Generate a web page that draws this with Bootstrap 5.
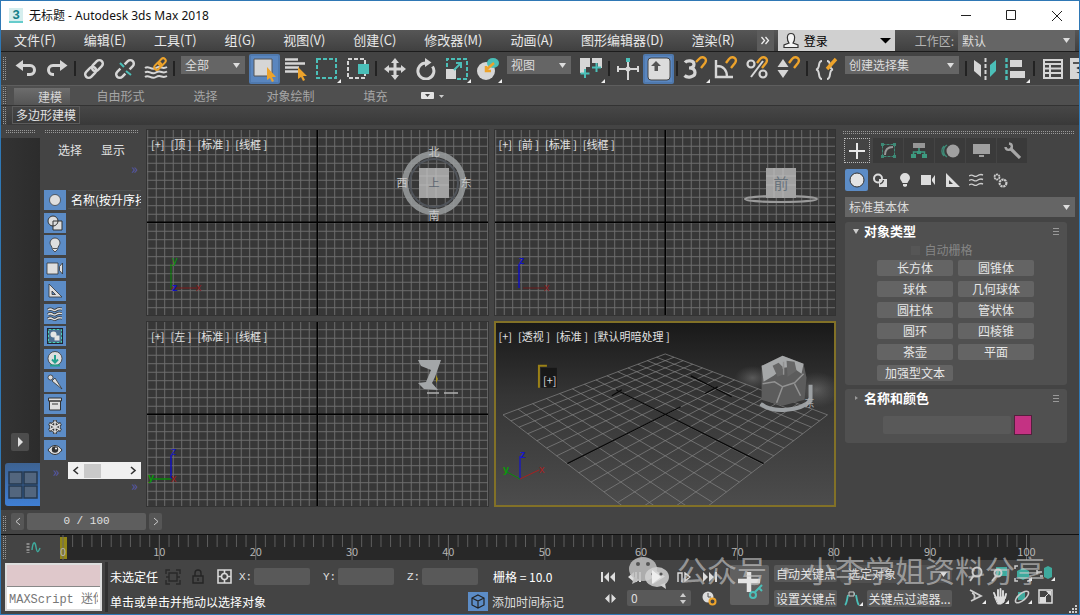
<!DOCTYPE html>
<html lang="zh-CN">
<head>
<meta charset="utf-8">
<meta name="viewport" content="width=device-width, initial-scale=1">
<title>无标题 - Autodesk 3ds Max 2018</title>
<link href="https://cdn.jsdelivr.net/npm/bootstrap@5.3.0/dist/css/bootstrap.min.css" rel="stylesheet">
<style>
:root{--lite:#d6d6d6;--teal:#4bbfb8;--amber:#eda32b;--hot:#5c8cc6;--face:#444}
body{min-height:100vh;background:var(--face);border:1px solid #2f78b5;color:#e2e2e2;font-family:"Noto Sans CJK SC",sans-serif;font-size:12px;line-height:16px;overflow:hidden}
button,input,select{font-family:inherit;font-size:12px;line-height:16px}
svg{display:block;flex:none}
.flat{background:none;border:0;padding:0;color:inherit;display:flex;align-items:center;justify-content:center}
.titlebar{height:29px;background:#fff;color:#111;font-family:"Noto Sans","Noto Sans CJK SC",sans-serif}
.titlebar .flat{width:45px;height:28px}
.logo3{width:14px;height:15px;margin-right:6px;background:#d5eeee;color:#14808a;font:bold 13px/13px "Liberation Sans",sans-serif;text-align:center;border-bottom:2px solid #6cc}
.menubar{height:22px;background:linear-gradient(#565656,#404040);border-bottom:1px solid #1c1c1c}
.menubar nav{padding:0 22px 0 13px}
.menubar nav a{color:#e8e8e8;font-size:13px;line-height:19px;text-decoration:none;white-space:nowrap}
.login{width:117px;background:#d0d0d0;color:#000}
.form-select.combo{background-color:#656565;color:#dcdcdc;border:0;border-radius:0;padding:0 14px 0 4px;height:18px;font-size:12px;line-height:18px;background-position:right 5px center;background-size:7px 5px;background-image:url("data:image/svg+xml,%3Csvg xmlns='http://www.w3.org/2000/svg' viewBox='0 0 7 5'%3E%3Cpath d='M0 0h7L3.5 5z' fill='%23ddd'/%3E%3C/svg%3E")}
.toolbar{height:33px;background:#434343;overflow:hidden;padding-left:2px}
.toolbar .gripv{margin-right:3px}
.tool{width:31px;height:30px;flex:none;position:relative}
.tool.on{background:#5a86bf;border:2px solid #4f79ae;border-radius:2px}
.fly::after{content:"";position:absolute;right:1px;bottom:1px;border:2px solid;border-color:transparent #eee #eee transparent}
.vsep{width:2px;height:15px;margin:0 2px;background:#222;flex:none}
.griph{height:4px;background:repeating-linear-gradient(90deg,#444 0 1px,transparent 1px 2px),linear-gradient(#999 0 1px,transparent 1px 2px,#999 2px 3px,transparent 3px)}
.gripv{width:4px;background:repeating-linear-gradient(#444 0 1px,transparent 1px 2px),linear-gradient(90deg,#999 0 1px,transparent 1px 2px,#999 2px 3px,transparent 3px);flex:none}
.ribbon{background:#4f4f4f;border-top:1px solid #5e5e5e;height:20px;color:#a6a6a6}
.ribbon .gripv,.subribbon .gripv{margin:0 5px 0 2px}
.ribbon .flat{width:85px}
.ribbon .flat.on{width:56px;margin:0 8px 0 2px;padding-left:16px;color:#d5d5d5;background:linear-gradient(#6d6d6d,#555);height:17px;align-self:flex-end}
.subribbon{height:20px;background:linear-gradient(#474747,#393939);border-top:1px solid #333}
.subribbon .flat{border:1px solid #5b5b5b;width:68px;height:18px}
.stage{flex:1;min-height:0}
.dock{width:39px;background:linear-gradient(90deg,#333,#2c2c2c)}
.dock .play{width:18px;height:18px;background:#4c4c4c;border-radius:2px;margin-left:10px}
.dock .layout{margin-left:4px;width:35px;height:43px;background:linear-gradient(#3d6291,#3f7fd4);border-radius:3px 0 0 3px}
.explorer{width:106px;padding-left:4px}
.explorer .tile{width:22px;height:20px;background:var(--hot)}
.more{color:#5a5ab0;line-height:12px;font-size:14px}
.hbar{height:17px;background:#f0f0f0}
.views{display:grid;grid-template-columns:1fr 1fr;grid-template-rows:1fr 1fr;gap:5px;padding:4px 0 3px;min-width:0}
.view{position:relative;background:#373737;overflow:hidden;border:1px solid #333;min-height:0}
.view.live{border:2px solid #827127;background:linear-gradient(#191919,#353535 40%,#4c4c4c)}
.view > svg.fill{width:100%;height:100%;position:absolute;inset:0}
.vlabel{position:relative;gap:6px;padding:7px 0 0 4px}
.view.live .vlabel{padding:6px 0 0 3px}
.vlabel .flat{font-size:11px;line-height:14px;color:#e0e0e0;white-space:pre}
.compass{position:absolute;right:16px;top:13px}
.axes{position:absolute;left:0;bottom:19px;font:11px "Liberation Sans",sans-serif}
.command{width:243px;padding:6px 4px 0 9px}
.tabs .flat{width:31px;height:25px;background:#3a3a3a;border-right:1px solid #444}
.tabs .flat.on{width:26px;margin-right:3px;background:none;border:1px dotted #bbb}
.cats .flat{width:23px;height:22px}
.cats .flat.on{background:var(--hot);border-radius:2px}
.rollout{background:#505050;border-radius:3px;margin-right:8px}
.rollout h2{font-size:13px;font-weight:700;color:#fff;line-height:18px;margin:0 0 0 5px}
.prims{display:grid;grid-template-columns:76px 76px;gap:5px;justify-content:center;margin-right:1px}
.prims button{background:#646464;border:0;border-radius:2px;color:#e6e6e6;height:16px;padding:0;line-height:16px}
.slider .flat{background:#565656;border-radius:2px;height:17px;width:13px;color:#ccc}
.slider .flat.thumb{width:119px;background:#5e5e5e;font-family:"Liberation Mono",monospace;font-size:11px;color:#e0e0e0}
.track{height:26px;border-top:1px solid #111}
.track .rule{background:#282828;flex:1;height:25px;position:relative}
.rule svg{width:100%;height:25px;overflow:visible}
.rule text{fill:#b5b5b5;font-size:11px;text-anchor:middle}
.status{height:54px}
.script{width:97px;height:48px;border:2px solid #ddd;background:#fff}
.script input{border:0;border-radius:0;height:22px;padding:0 2px;width:100%;display:block;font-family:"Liberation Mono","Noto Sans CJK SC",monospace;color:#777}
.script input.rec{background:#dfc8cb;border-bottom:1px solid #888}
.num{width:56px;height:17px;background:#595959;border:0;border-radius:2px;padding:0 4px;color:#ddd}
.xyz{font-family:"Liberation Mono",monospace;font-size:11px;width:15px}
.keyb{background:#5a5a5a;border:0;border-radius:2px;color:#e6e6e6;height:17px;padding:0 2px;white-space:nowrap;overflow:hidden}
.nav4{display:grid;grid-template-columns:repeat(4,22px);gap:6px 1px}
.stamp{position:absolute;right:34px;bottom:23px;z-index:5;pointer-events:none;color:rgba(205,205,205,.62);font-size:30px;line-height:40px;white-space:pre}
</style>
</head>
<body class="d-flex flex-column position-relative">
<header class="titlebar d-flex align-items-center ps-2">
  <span class="logo3">3</span>
  <span class="flex-grow-1">无标题 - Autodesk 3ds Max 2018</span>
  <button class="flat" aria-label="最小化"><svg width="11" height="11" stroke="#222"><path d="M0 5.500h10"/></svg></button>
  <button class="flat" aria-label="最大化"><svg width="11" height="11" fill="none" stroke="#222"><path d="M.5.500h9v9h-9z"/></svg></button>
  <button class="flat" aria-label="关闭"><svg width="12" height="12" stroke="#222"><path d="M1 1l10 10M11 1L1 11"/></svg></button>
</header>

<div class="menubar d-flex">
  <nav class="d-flex justify-content-between flex-grow-1">
    <a href="#">文件(F)</a><a href="#">编辑(E)</a><a href="#">工具(T)</a><a href="#">组(G)</a><a href="#">视图(V)</a><a href="#">创建(C)</a><a href="#">修改器(M)</a><a href="#">动画(A)</a><a href="#">图形编辑器(D)</a><a href="#">渲染(R)</a>
  </nav>
  <button class="flat px-1 me-1" style="background:#5c5c5c" aria-label="更多菜单"><svg width="9" height="9" fill="none" stroke="#eee" stroke-width="1.300"><path d="M.5 1l3 3.500-3 3.500M4.500 1l3 3.500-3 3.500"/></svg></button>
  <button class="flat login px-1 gap-1"><svg width="18" height="18" fill="#f4f4f4" stroke="#333" stroke-width="1.200"><path d="M9 1.500c-5 0-4 7-2 9.500L2 13v2.500h14V13l-5-2c2-2.500 3-9.500-2-9.500z"/></svg><span class="flex-grow-1 text-start">登录</span><svg width="11" height="6"><path d="M0 0h11L5.500 5.500z"/></svg></button>
  <label class="px-1 ms-3" for="ws" style="line-height:22px;color:#b4b4b4">工作区:</label>
  <select id="ws" class="form-select combo me-1" style="width:117px;height:21px"><option>默认</option></select>
</div>

<div class="toolbar d-flex align-items-center">
  <span class="gripv align-self-stretch my-1"></span>
  <button class="flat tool" aria-label="撤消"><svg width="22" height="22" fill="none" stroke="#d6d6d6" stroke-width="3"><path d="M7 7.500h8c6 0 6 9 0 9h-3"/><path d="M8 2v11L.5 7.500z" fill="#d6d6d6" stroke="none"/></svg></button>
  <button class="flat tool" aria-label="重做"><svg width="22" height="22" fill="none" stroke="#d6d6d6" stroke-width="3"><path d="M15 7.500H7c-6 0-6 9 0 9h1"/><path d="M14 2v11l7.500-5.500z" fill="#d6d6d6" stroke="none"/></svg></button>
  <span class="vsep"></span>
  <button class="flat tool" aria-label="链接"><svg width="22" height="22" fill="none" stroke="#d6d6d6" stroke-width="2.500" stroke-linecap="round"><g transform="rotate(-45 11 11)"><rect x="0" y="7.500" width="12.500" height="7" rx="3.500"/><rect x="9.500" y="7.500" width="12.500" height="7" rx="3.500"/></g></svg></button>
  <button class="flat tool" aria-label="断开链接"><svg width="22" height="22" fill="none" stroke="#d6d6d6" stroke-width="2.500"><g transform="rotate(-45 11 11)"><path d="M8 7.500H3.500a3.500 3.500 0 000 7H8M14 7.500h4.500a3.500 3.500 0 010 7H14"/></g><path d="M6 5l4 4M12 13l5 4" stroke="#4bbfb8" stroke-width="2"/></svg></button>
  <button class="flat tool" aria-label="绑定到空间扭曲"><svg width="24" height="24" fill="none" stroke="#d6d6d6" stroke-width="2"><path d="M1 11c4-3 6 3 11 0s6 2 11-1M1 15.500c4-3 6 3 11 0s6 2 11-1M1 20c4-3 6 3 11 0s6 2 11-1"/><g stroke="#eda32b" transform="rotate(-45 16 7)"><rect x="9" y="4.500" width="8" height="5" rx="2.500"/><rect x="15" y="4.500" width="8" height="5" rx="2.500"/></g></svg></button>
  <span class="vsep"></span>
  <select class="form-select combo mx-1 align-self-start mt-1 flex-shrink-0" aria-label="选择过滤器" style="width:64px"><option>全部</option></select>
  <button class="flat tool on" aria-label="选择对象"><svg width="26" height="26"><path d="M2 3h18v17H2z" fill="#d6d6d6" stroke="#555"/><path d="M15 11v13l3-2 2 4 2-1-2-4h4z" fill="#eda32b"/></svg></button>
  <button class="flat tool" aria-label="按名称选择"><svg width="24" height="24"><path d="M1 2.500h13M1 6.500h20M1 10.500h14M1 14.500h13" stroke="#d6d6d6" stroke-width="2.400"/><path d="M14 10v12l3-2 2 4 2-1-2-4h4z" fill="#eda32b"/></svg></button>
  <button class="flat tool fly" aria-label="矩形选择区域"><svg width="24" height="24" fill="none" stroke="#4bbfb8" stroke-width="2"><path d="M2 2h19v19H2z" stroke-dasharray="4 2"/></svg></button>
  <button class="flat tool" aria-label="窗口/交叉"><svg width="24" height="24" fill="none" stroke="#d6d6d6" stroke-width="2"><path d="M2 2h17v19H2z" stroke-dasharray="4 2"/><path d="M12 7h11v10H12z" fill="#4bbfb8" stroke="none"/></svg></button>
  <span class="vsep"></span>
  <button class="flat tool" aria-label="移动"><svg width="22" height="22" fill="#d6d6d6"><path d="M11 0l4 5h-2.500v4.500H17V7l5 4-5 4v-2.500h-4.500V17H15l-4 5-4-5h2.500v-4.500H5V15l-5-4 5-4v2.500h4.500V5H7z"/></svg></button>
  <button class="flat tool" aria-label="旋转"><svg width="22" height="22" fill="none" stroke="#d6d6d6" stroke-width="3"><path d="M17.500 8.500A8 8 0 1111 5"/><path d="M10 0v9l6.500-4.500z" fill="#d6d6d6" stroke="none"/></svg></button>
  <button class="flat tool fly" aria-label="缩放"><svg width="24" height="24" fill="none" stroke="#4bbfb8" stroke-width="2"><path d="M2 10V2h20v20H12" stroke-dasharray="4 2"/><path d="M1 12h10v10H1z" fill="#d6d6d6" stroke="none"/><path d="M9 13l7-7M11 6h5v5"/></svg></button>
  <button class="flat tool fly" aria-label="放置"><svg width="24" height="24"><circle cx="10" cy="14" r="9" fill="#d6d6d6"/><ellipse cx="17" cy="6" rx="6" ry="5" fill="#4bbfb8"/><path d="M18 6l-7 6M10 9v5h5" stroke="#eda32b" stroke-width="2.500" fill="none"/></svg></button>
  <select class="form-select combo mx-1 align-self-start mt-1 flex-shrink-0" aria-label="参考坐标系" style="width:64px"><option>视图</option></select>
  <button class="flat tool fly" aria-label="使用轴点中心"><svg width="24" height="24"><path d="M1 1h10v9H7v6H1zM13 1h10v10h-4V6h-6z" fill="#d6d6d6"/><path d="M6 12v9M1.500 16.500h9M17.500 6v9M13 10.500h9" stroke="#4bbfb8" stroke-width="2"/></svg></button>
  <span class="vsep"></span>
  <button class="flat tool" aria-label="选择并操纵"><svg width="24" height="24" stroke="#d6d6d6" stroke-width="2"><path d="M12 3v20M1 12h22M2 9v6M22 9v6"/><path d="M10 1h4v4h-4z" fill="#4bbfb8" stroke="none"/><circle cx="12" cy="12" r="2.500" fill="#d6d6d6" stroke="none"/></svg></button>
  <button class="flat tool on" aria-label="键盘快捷键覆盖"><svg width="24" height="24"><rect x="1" y="1" width="22" height="22" rx="3" fill="#dcdcdc" stroke="#444"/><path d="M9 4l5 5h-3v5H7.500V9H4z" fill="#555"/></svg></button>
  <span class="vsep"></span>
  <button class="flat tool fly" aria-label="捕捉开关"><svg width="25" height="25" fill="none"><path d="M2 6.500c2-2.500 9-2.500 9 1.800 0 3-3 3.700-5 3.700 3 0 6 1 6 4.500 0 5-8 5.500-10.500 3" stroke="#d6d6d6" stroke-width="3.200"/><path d="M13 6l3-3c4-4 9 0 6 4l-4 5" stroke="#eda32b" stroke-width="2.400"/></svg></button>
  <button class="flat tool" aria-label="角度捕捉"><svg width="25" height="25" fill="none"><path d="M2 4v17h17M3 10c6 0 10 4 10 11" stroke="#d6d6d6" stroke-width="2.400"/><path d="M12 7l3-4c4-4 9 0 6 4l-4 5" stroke="#eda32b" stroke-width="2.400"/></svg></button>
  <button class="flat tool" aria-label="百分比捕捉"><svg width="25" height="25" fill="none"><path d="M18 5L6 21" stroke="#d6d6d6" stroke-width="2"/><circle cx="6" cy="8" r="3.500" stroke="#d6d6d6" stroke-width="2.200"/><circle cx="18" cy="18" r="3.500" stroke="#d6d6d6" stroke-width="2.200"/><path d="M12 7l3-4c4-4 9 0 6 4l-4 5" stroke="#eda32b" stroke-width="2.400"/></svg></button>
  <button class="flat tool" aria-label="微调器捕捉"><svg width="25" height="25" fill="none"><path d="M7 3l5.500 8h-11zM7 22l5.500-8h-11z" fill="#d6d6d6"/><path d="M13 7l3-4c4-4 9 0 6 4l-4 5" stroke="#eda32b" stroke-width="2.400"/></svg></button>
  <span class="vsep"></span>
  <button class="flat tool" aria-label="编辑命名选择集"><svg width="24" height="24" fill="none" stroke="#d6d6d6" stroke-width="2"><path d="M8 4C3 4 7 12 2 12.500 7 13 3 22 8 22M13 4c5 0 1 8 6 8.500C14 13 18 22 13 22"/><path d="M22 2l-9 10" stroke="#eda32b" stroke-width="3.400"/></svg></button>
  <select class="form-select combo mx-1 align-self-start mt-1 flex-shrink-0" aria-label="命名选择集" style="width:114px"><option>创建选择集</option></select>
  <span class="vsep"></span>
  <button class="flat tool" aria-label="镜像"><svg width="24" height="24"><path d="M1 3l7 5v12l-7-6z" fill="#d6d6d6"/><path d="M23 3l-6 5v12l6-6z" fill="#4bbfb8"/><path d="M12.500 1v22" stroke="#d6d6d6" stroke-width="2" stroke-dasharray="4 2"/></svg></button>
  <button class="flat tool fly" aria-label="对齐"><svg width="24" height="24"><path d="M2.500 1v22" stroke="#4bbfb8" stroke-width="2.400" stroke-dasharray="4 2"/><path d="M6 3h12v7H6zM6 14h15v7H6z" fill="#d6d6d6"/></svg></button>
  <span class="vsep"></span>
  <button class="flat tool" aria-label="场景资源管理器"><svg width="22" height="22" fill="none" stroke="#d6d6d6" stroke-width="2"><path d="M2 2h18v18H2zM2 6h18M2 10.500h18M2 15h18M8 6v14"/></svg></button>
  <button class="flat tool" aria-label="层资源管理器"><svg width="28" height="24" fill="#d6d6d6"><path d="M0 1h26v21H0z"/><path d="M3 6h22" stroke="#555" stroke-width="2"/><path d="M5 11l8-4 8 4-8 4zM5 15l8 4 8-4" fill="#333" stroke="#ddd"/></svg></button>
</div>

<div class="ribbon d-flex align-items-stretch">
  <span class="gripv"></span>
  <button class="flat on">建模</button>
  <button class="flat">自由形式</button><button class="flat">选择</button><button class="flat">对象绘制</button><button class="flat">填充</button>
  <button class="flat" style="width:30px" aria-label="功能区显示"><svg width="24" height="8"><rect width="13" height="7" rx="1" fill="#e4e4e4"/><path d="M4 2h5L6.500 5z" fill="#444"/><path d="M18 3h5l-2.500 3z" fill="#ccc"/></svg></button>
</div>
<div class="subribbon d-flex">
  <span class="gripv"></span>
  <button class="flat text-nowrap">多边形建模</button>
</div>

<main class="stage d-flex">
  <aside class="d-flex flex-column flex-shrink-0">
    <div class="griph mx-1" style="margin-top:5px;width:31px"></div>
    <div class="dock d-flex flex-column justify-content-end flex-grow-1 mt-1 pb-1">
      <button class="flat play mb-2" aria-label="展开"><svg width="7" height="10"><path d="M1 0l5 5-5 5z" fill="#e0e0e0"/></svg></button>
      <button class="flat layout mt-1" aria-label="视口布局"><svg width="30" height="28" fill="#53667e" stroke="#26384e" stroke-width="1.500"><path d="M1 1h13v12H1zM16 1h13v12H16zM1 15h13v12H1zM16 15h13v12H16z"/></svg></button>
    </div>
  </aside>

  <aside class="explorer d-flex flex-column flex-shrink-0">
    <div class="griph me-2" style="margin-top:5px"></div>
    <div class="d-flex" style="padding:8px 0 0 14px;gap:19px"><button class="flat">选择</button><button class="flat">显示</button></div>
    <div class="more text-end pe-2 mb-3 mt-1">»</div>
    <div class="d-flex flex-grow-1" style="gap:2px;min-height:0">
      <div class="d-flex flex-column justify-content-between">
        <button class="flat tile" aria-label="几何体"><svg width="16" height="16"><circle cx="8" cy="8" r="5.500" fill="#dedede" stroke="#333" stroke-width=".7"/></svg></button>
        <button class="flat tile" aria-label="图形"><svg width="16" height="16" fill="#dedede" stroke="#333"><circle cx="6" cy="6" r="5"/><path d="M6 6h9v9H6z"/><path d="M11 6a5 5 0 01-5 5" fill="none"/></svg></button>
        <button class="flat tile" aria-label="灯光"><svg width="16" height="16" fill="#dedede" stroke="#333" stroke-width=".8"><path d="M8 1a5 5 0 015 5c0 2-2 3-2.500 6.500L8 15l-2.500-2.500C5 9 3 8 3 6a5 5 0 015-5z"/><path d="M6 11.500h4"/></svg></button>
        <button class="flat tile" aria-label="摄影机"><svg width="18" height="14" fill="#dedede" stroke="#333" stroke-width=".8"><path d="M1 2h11v11H1zM13.500 5.500L16.500 2v11l-3-3.500z"/></svg></button>
        <button class="flat tile" aria-label="辅助对象"><svg width="16" height="16"><path d="M2 1v13h13zM5 8l3.500 3.500H5z" fill="#dedede" fill-rule="evenodd" stroke="#333" stroke-width=".8"/></svg></button>
        <button class="flat tile" aria-label="空间扭曲"><svg width="16" height="16" fill="none"><g stroke="#333" stroke-width="3"><path d="M1 4c4-3 5 2 8 0s4-1 6-1M1 8.500c4-3 5 2 8 0s4-1 6-1M1 13c4-3 5 2 8 0s4-1 6-1"/></g><g stroke="#dedede" stroke-width="1.500"><path d="M1 4c4-3 5 2 8 0s4-1 6-1M1 8.500c4-3 5 2 8 0s4-1 6-1M1 13c4-3 5 2 8 0s4-1 6-1"/></g></svg></button>
        <button class="flat tile" aria-label="组"><svg width="16" height="16"><path d="M1 1h14v14H1z" fill="#4d6f92" stroke="#223" stroke-width="2"/><path d="M1.500 1.500h13v13h-13z" fill="none" stroke="#4bd0b8" stroke-dasharray="3 1"/><circle cx="6.500" cy="6.500" r="3" fill="#e4e4e4"/><path d="M7.500 7.500h5v5h-5z" fill="#e4e4e4"/></svg></button>
        <button class="flat tile" aria-label="外部参照"><svg width="16" height="16"><circle cx="8" cy="7.500" r="7" fill="#dedede" stroke="#333" stroke-width=".8"/><path d="M8 4v7M5 8.500l3 3 3-3M3 14.500h10" stroke="#23a08c" stroke-width="2" fill="none"/></svg></button>
        <button class="flat tile" aria-label="骨骼"><svg width="16" height="16" fill="#dedede" stroke="#333" stroke-width=".8"><circle cx="3.500" cy="3.500" r="2.500"/><path d="M5 7l3-3 7 11z"/></svg></button>
        <button class="flat tile" aria-label="容器"><svg width="16" height="14" fill="#dedede" stroke="#333"><path d="M2.500 4h11v9h-11zM1.500 1h13v3h-13z"/><path d="M5 7h6"/></svg></button>
        <button class="flat tile" aria-label="冻结"><svg width="16" height="16" stroke="#333" stroke-width="3.400" fill="none"><path d="M8 1v14M2 4.500l12 7M14 4.500l-12 7"/><circle cx="8" cy="8" r="4.500" stroke="#444" stroke-width="2.600"/><path d="M8 1.500v13M2.500 5l11 6M13.500 5l-11 6" stroke="#dedede" stroke-width="1.500"/><circle cx="8" cy="8" r="4.500" stroke="#dedede" stroke-width="1"/></svg></button>
        <button class="flat tile" aria-label="隐藏"><svg width="16" height="12"><path d="M1 6c4-6 10-6 14 0-4 6-10 6-14 0z" fill="#dedede" stroke="#333"/><circle cx="8" cy="5.500" r="3.200" fill="#333"/><circle cx="9" cy="4.500" r="1" fill="#fff"/></svg></button>
      </div>
      <div class="flex-grow-1 overflow-hidden" style="margin-right:5px">
        <div class="text-nowrap overflow-hidden text-white" style="border:1px solid #505050;border-width:1px 0;line-height:17px;padding-left:3px">名称(按升序排序)</div>
      </div>
    </div>
    <div class="d-flex align-items-center" style="margin:2px 5px 0 0"><span class="more text-center" style="width:24px">»</span>
      <div class="hbar d-flex flex-grow-1 align-items-center px-1"><button class="flat" aria-label="左移"><svg width="8" height="9" fill="none" stroke="#333" stroke-width="1.600"><path d="M6 1L2 4.500 6 8"/></svg></button><span style="width:17px;height:14px;background:#c9c9c9;margin-left:4px"></span><button class="flat ms-auto" aria-label="右移"><svg width="8" height="9" fill="none" stroke="#333" stroke-width="1.600"><path d="M2 1l4 3.500L2 8"/></svg></button></div>
    </div>
    <div class="more text-end pe-2 mb-2" style="height:23px">»</div>
  </aside>

  <section class="views flex-grow-1">
    <div class="view">
      <svg class="fill"><defs><pattern id="mesh" width="8.500" height="8.500" patternUnits="userSpaceOnUse"><path d="M0 0H8.500M0 0V8.500" stroke="#6e6e6e" stroke-width="1.900" fill="none"/></pattern></defs><svg x="50%" y="50%" overflow="visible"><rect x="-1020" y="-1020" width="2040" height="2040" fill="url(#mesh)"/><path d="M-1000 0H1000M0-1000V1000" stroke="#000" stroke-width="1.500"/></svg></svg>
      <div class="vlabel d-flex"><button class="flat">[+]</button><button class="flat">[顶 ]</button><button class="flat">[标准 ]</button><button class="flat">[线框 ]</button></div>
      <svg class="compass" width="76" height="80" font-size="11" fill="#c8c8c8" text-anchor="middle"><circle cx="38" cy="40" r="29" fill="none" stroke="#9a9d9f" stroke-width="6" opacity=".85"/><circle cx="38" cy="40" r="24" fill="none" stroke="#50545a" stroke-width="2"/><path d="M23 25h30v30H23z" fill="#a2a2a2"/><path d="M23 33h30M23 42h30M31 25v30M40 25v30" stroke="#b2b2b2"/><text x="38" y="44" fill="#5c6570">上</text><text x="38" y="13">北</text><text x="6" y="44">西</text><text x="70" y="44">东</text><text x="38" y="77">南</text></svg>
      <svg class="axes" width="60" height="44"><path d="M24 37V12" stroke="#008a00"/><path d="M24 36h26" stroke="#7d1a1a"/><text x="25" y="12" fill="#0a9a0a">y</text><text x="25" y="39" fill="#1212c0" font-weight="bold">z</text><text x="49" y="39" fill="#8a1c1c">x</text></svg>
    </div>
    <div class="view">
      <svg class="fill"><svg x="50%" y="50%" overflow="visible"><rect x="-1020" y="-1020" width="2040" height="2040" fill="url(#mesh)"/><path d="M-1000 0H1000M0-1000V1000" stroke="#000" stroke-width="1.500"/></svg></svg>
      <div class="vlabel d-flex"><button class="flat">[+]</button><button class="flat">[前 ]</button><button class="flat">[标准 ]</button><button class="flat">[线框 ]</button></div>
      <svg class="compass" width="76" height="80" font-size="15" text-anchor="middle"><ellipse cx="38" cy="56" rx="36" ry="3" fill="none" stroke="#9b9b9b" stroke-width="2"/><path d="M23 25h30v30H23z" fill="#a2a2a2"/><path d="M23 33h30M23 42h30M31 25v30M40 25v30" stroke="#b2b2b2"/><text x="38" y="46" fill="#68737c">前</text></svg>
      <svg class="axes" width="60" height="44"><path d="M24 36V12" stroke="#1212c0" stroke-width="1.500"/><path d="M28 36h22" stroke="#6a1a1a"/><text x="24" y="12" fill="#1212c0" font-weight="bold">z</text><text x="49" y="39" fill="#8a1c1c">x</text></svg>
    </div>
    <div class="view">
      <svg class="fill"><svg x="50%" y="50%" overflow="visible"><rect x="-1020" y="-1020" width="2040" height="2040" fill="url(#mesh)"/><path d="M-1000 0H1000M0-1000V1000" stroke="#000" stroke-width="1.500"/></svg></svg>
      <div class="vlabel d-flex"><button class="flat">[+]</button><button class="flat">[左 ]</button><button class="flat">[标准 ]</button><button class="flat">[线框 ]</button></div>
      <svg class="compass" width="76" height="80"><path d="M22 25h23l-6 17-3 6 6 7-14-1-6-6 8-1 5-12-10-4z" fill="#a3a6a8"/><path d="M40 40l2 4-2 4z" fill="#a89422"/><path d="M31 58h12M48 58h14" stroke="#b0b0b0" stroke-width="1.500"/></svg>
      <svg class="axes" width="60" height="44"><path d="M24 36V12" stroke="#1212c0" stroke-width="1.500"/><path d="M24 36H6" stroke="#0a8a0a" stroke-width="1.500"/><text x="24" y="12" fill="#1212c0">z</text><text x="24" y="39" fill="#a01818">x</text><text x="1" y="38" fill="#0a9a0a" font-weight="bold">y</text></svg>
    </div>
    <div class="view live">
      <svg class="fill" viewBox="495 323 339 183" preserveAspectRatio="xMidYMid slice">
        <defs><radialGradient id="soft"><stop offset="0" stop-color="#aaa" stop-opacity=".35"/><stop offset="1" stop-color="#888" stop-opacity="0"/></radialGradient></defs>
        <path id="plane" fill="none" stroke="#858585" stroke-width=".7"/>
        <path d="M566.500 464L680 407M763 464L615 390M690 376l41 21M704 394l13-7M611 396l10-6" stroke="#080808" stroke-width="1.300" fill="none"/>
        <path d="M540 368h16v20h-16z" fill="#101010" opacity=".7"/><path d="M538 388v-22h8" fill="none" stroke="#9b8116" stroke-width="2"/>
        <text x="542" y="385" font-size="11" fill="#ddd">[+]</text>
        <ellipse cx="752" cy="378" rx="18" ry="12" fill="url(#soft)"/><ellipse cx="816" cy="390" rx="24" ry="18" fill="url(#soft)"/>
        <path d="M760 404c12 10 40 7 50-3v-16" fill="none" stroke="#9ca0a3" stroke-width="4"/>
        <path d="M761 366l21-10 21 8 3 14-2 22-22 6-21-6z" fill="#5c5c5c"/>
        <path d="M761 366l21-10 21 8-2 10-10-7-8 1-10 8-10 6z" fill="#a5a7a8"/>
        <path d="M772 366l6-3 4 4v8l-5 2zM786 361l8 1 2 9-9 6z" fill="#666"/>
        <path d="M762 384l12-2 8 5 12-4 9-9M782 387l-6 16M794 384l6 12M783 362v13" stroke="#929292" fill="none" stroke-width="1.500"/>
        <text x="804" y="407" font-size="10" fill="#aaa">东</text>
      </svg>
      <div class="vlabel d-flex"><button class="flat">[+]</button><button class="flat">[透视 ]</button><button class="flat">[标准 ]</button><button class="flat">[默认明暗处理 ]</button></div>
      <svg class="axes" width="60" height="44" style="bottom:18px"><path d="M24 36V13" stroke="#1616c8" stroke-width="1.300"/><path d="M24 36L11 29" stroke="#0a8a0a"/><path d="M24 36l19-9" stroke="#a82020"/><text x="24" y="15" fill="#1616c8" font-weight="bold">z</text><text x="7" y="30" fill="#0a9a0a" font-weight="bold">y</text><text x="43" y="30" fill="#a82020">x</text></svg>
    </div>
  </section>

  <aside class="command flex-shrink-0">
    <div class="griph" style="margin-left:-3px"></div>
    <div class="tabs d-flex" style="margin:3px 0 0 -1px">
      <button class="flat on" aria-label="创建"><svg width="18" height="18" stroke="#e8e8e8" stroke-width="2"><path d="M9 1v16M1 9h16"/></svg></button>
      <button class="flat" aria-label="修改"><svg width="17" height="17" fill="none" stroke="#3d8a76"><path d="M2.500 2.500h12v12h-12z" stroke-dasharray="3 1"/><path d="M1 1h3v3H1zM13 1h3v3h-3zM1 13h3v3H1zM13 13h3v3h-3z" fill="#3d8a76" stroke="none"/><path d="M5 13c0-5 3-8 8-8" stroke="#999" stroke-width="2"/></svg></button>
      <button class="flat" aria-label="层次"><svg width="16" height="17"><path d="M2 1h12v5H2z" fill="#969696"/><path d="M8 6v4M2.500 13v-3h11v3" stroke="#3d9a80" stroke-width="1.500" fill="none"/><path d="M0 12h5v4H0zM6 9h4v3H6zM11 12h5v4h-5z" fill="#3d9a80"/></svg></button>
      <button class="flat" aria-label="运动"><svg width="19" height="16" fill="none"><path d="M6 2a7 7 0 000 12M3 3a7 7 0 000 10" stroke="#3d8a76" stroke-width="1.400"/><circle cx="12" cy="8" r="6.500" fill="#a0a0a0"/></svg></button>
      <button class="flat" aria-label="显示"><svg width="17" height="15" fill="#a0a0a0"><path d="M0 1h17v10H0zM6 12h5v2H6z"/></svg></button>
      <button class="flat" aria-label="实用程序"><svg width="17" height="17" fill="none" stroke="#a8a8a8"><path d="M6 6l10 10" stroke-width="3.200"/><path d="M5 1.500a3.200 3.200 0 11-3.500 3.500" stroke-width="2.400"/></svg></button>
    </div>
    <div class="cats d-flex" style="margin-top:6px;gap:1px">
      <button class="flat on" aria-label="几何体"><svg width="16" height="16"><circle cx="8" cy="8" r="7" fill="#e4e4e4" stroke="#333"/></svg></button>
      <button class="flat" aria-label="图形"><svg width="15" height="15"><circle cx="5" cy="5.500" r="4" fill="none" stroke="#ddd" stroke-width="2"/><path d="M6 6h8v8H6z" fill="#ddd"/><path d="M7 11a5 5 0 003.500-4" stroke="#444" stroke-width="1.300" fill="none"/></svg></button>
      <button class="flat" aria-label="灯光"><svg width="12" height="16" fill="#ddd"><path d="M6 1a5 5 0 015 5c0 2-2 3-2.500 5h-5C3 9 1 8 1 6a5 5 0 015-5zM4 12h4v2L6 15l-2-1z"/></svg></button>
      <button class="flat" aria-label="摄影机"><svg width="15" height="12" fill="#ddd"><path d="M0 1h10v10H0zM11 5l3-4v10l-3-4z"/></svg></button>
      <button class="flat" aria-label="辅助对象"><svg width="15" height="15"><path d="M1 0v14h14zM4 7l4 4H4z" fill="#ddd" fill-rule="evenodd"/></svg></button>
      <button class="flat" aria-label="空间扭曲"><svg width="15" height="14" fill="none" stroke="#ccc" stroke-width="1.400"><path d="M0 3c4-3 5 2 8 0s4-2 6-1M0 7.500c4-3 5 2 8 0s4-2 6-1M0 12c4-3 5 2 8 0s4-2 6-1"/></svg></button>
      <button class="flat" aria-label="系统"><svg width="15" height="15" fill="none" stroke="#ccc"><circle cx="4" cy="4" r="2.500" stroke-width="1.800" stroke-dasharray="2 .6"/><circle cx="10" cy="10" r="3.400" stroke-width="2.200" stroke-dasharray="2.200 .6"/></svg></button>
    </div>
    <select class="form-select combo" aria-label="类别" style="height:20px;margin-top:6px"><option>标准基本体</option></select>
    <div class="rollout" style="padding-bottom:4px;margin-top:5px">
      <div class="d-flex align-items-center px-2"><svg width="6" height="5"><path d="M0 0h6L3 5z" fill="#ccc"/></svg><h2 class="flex-grow-1">对象类型</h2><svg width="6" height="7" stroke="#999"><path d="M0 .5h6M0 3.500h6M0 6.500h6"/></svg></div>
      <div class="d-flex justify-content-center align-items-center" style="gap:4px;color:#858585;height:20px;padding-right:28px"><input type="checkbox" class="form-check-input m-0 rounded-0 border-0 shadow-none" id="auto" disabled style="width:9px;height:9px;background-color:#5c5c5c"><label for="auto">自动栅格</label></div>
      <div class="prims">
        <button>长方体</button><button>圆锥体</button><button>球体</button><button>几何球体</button><button>圆柱体</button><button>管状体</button><button>圆环</button><button>四棱锥</button><button>茶壶</button><button>平面</button><button>加强型文本</button>
      </div>
    </div>
    <div class="rollout mt-1">
      <div class="d-flex align-items-center px-2"><svg width="6" height="7"><path d="M2 1l3 2-3 2z" fill="#999"/></svg><h2 class="flex-grow-1">名称和颜色</h2><svg width="6" height="7" stroke="#999"><path d="M0 .5h6M0 3.500h6M0 6.500h6"/></svg></div>
      <div class="d-flex align-items-center" style="padding:8px 0 8px 38px;gap:3px"><input class="num" style="width:128px;height:18px" aria-label="对象名称"><button class="flat" aria-label="对象颜色" style="width:18px;height:20px;background:#c43283;border:1px solid #54203d"></button></div>
    </div>
  </aside>
</main>

<div class="slider d-flex align-items-center" style="height:24px;padding:0 0 2px 2px">
  <span class="gripv align-self-end" style="height:17px;margin-right:4px"></span>
  <button class="flat" aria-label="上一帧"><svg width="6" height="9" fill="none" stroke="#ccc"><path d="M5 1L1 4.500 5 8"/></svg></button>
  <button class="flat thumb" style="margin:0 3px">0 / 100</button>
  <button class="flat" aria-label="下一帧"><svg width="6" height="9" fill="none" stroke="#ccc"><path d="M1 1l4 3.500L1 8"/></svg></button>
</div>
<div class="track d-flex" style="padding:0 49px 0 2px">
  <span class="gripv"></span>
  <button class="flat" style="width:53px" aria-label="打开迷你曲线编辑器"><svg width="15" height="12" fill="none"><path d="M2 1v10" stroke="#888" stroke-width="3" stroke-dasharray="2 1"/><path d="M6 8c1-9 3-9 4-3s2 6 4 1" stroke="#3faa9d" stroke-width="1.500"/></svg></button>
  <div class="rule"><svg id="ticks"><rect x="0" y="2" width="7" height="22" fill="#938717"/></svg></div>
</div>

<footer class="status d-flex">
  <div class="script flex-shrink-0" style="margin:3px 3px 0 4px"><input class="rec" aria-label="宏录制器"><input value="MAXScript 迷你" aria-label="MAXScript 迷你侦听器"></div>
  <span style="width:3px;background:#303030;margin:2px 2px 2px 0"></span>
  <div class="d-flex flex-column" style="width:456px">
    <div class="d-flex align-items-center" style="height:33px"><span class="text-white me-1">未选定任</span>
      <button class="flat" style="width:22px" aria-label="孤立当前选择"><svg width="16" height="16" fill="none" stroke="#282828" stroke-width="1.400"><path d="M1 5V1h4M11 1h4v4M15 11v4h-4M5 15H1v-4M4 4h8v8H4zM1 8h3M12 8h3"/></svg></button>
      <button class="flat" style="width:28px" aria-label="选择锁定"><svg width="12" height="15" fill="none" stroke="#242424" stroke-width="1.400"><path d="M1 7h10v7H1zM3 7V4c0-4 6-4 6 0v3M6 9v3"/></svg></button>
      <button class="flat" style="width:24px" aria-label="变换输入模式"><svg width="15" height="15" fill="none" stroke="#d8d8d8" stroke-width="1.600"><path d="M1 1h13v13H1z"/><circle cx="7.500" cy="7.500" r="3"/><path d="M7.500 1v4M7.500 10v4M1 7.500h4M10 7.500h4"/></svg></button>
      <label class="xyz" for="cx" style="margin-left:3px">X:</label><input id="cx" class="num"><label class="xyz" for="cy" style="margin-left:13px">Y:</label><input id="cy" class="num"><label class="xyz" for="cz" style="margin-left:13px">Z:</label><input id="cz" class="num">
      <span class="text-white text-nowrap" style="margin-left:15px">栅格 = 10.0</span></div>
    <div class="d-flex align-items-center" style="height:17px"><span class="text-white flex-grow-1">单击或单击并拖动以选择对象</span>
      <button class="flat" style="width:20px;height:19px;background:var(--hot)" aria-label="自适应降级"><svg width="14" height="15" fill="none" stroke="#222" stroke-width="1.200"><path d="M7 1l6 3v7l-6 3-6-3V4zM1 4l6 3 6-3M7 7v7"/></svg></button>
      <button class="flat text-nowrap" style="margin:0 2px 0 4px;color:#ddd;width:72px">添加时间标记</button></div>
  </div>

  <div class="d-flex flex-column ms-auto" style="width:116px">
    <div class="d-flex justify-content-between align-items-center" style="height:33px">
      <button class="flat" aria-label="转至开头"><svg width="15" height="10" fill="#ddd"><path d="M0 0h2v10H0zM8 0v10L3 5zM14 0v10L9 5z"/></svg></button>
      <button class="flat" aria-label="上一帧"><svg width="14" height="10" fill="#ddd"><path d="M7 0v10L1 5zM8 0h2v10H8zM12 0h2v10h-2z"/></svg></button>
      <button class="flat" aria-label="播放"><svg width="14" height="15" fill="#eee"><path d="M1 0l12 7.500L1 15z"/></svg></button>
      <button class="flat" aria-label="下一帧"><svg width="14" height="10" fill="none" stroke="#ddd" stroke-width="1.400"><path d="M1 10V1h4v9M8 1v8l5-4z"/></svg></button>
      <button class="flat" aria-label="转至结尾"><svg width="15" height="10" fill="#ddd"><path d="M13 0h2v10h-2zM1 0v10l5-5zM7 0v10l5-5z"/></svg></button>
    </div>
    <div class="d-flex align-items-center justify-content-between" style="height:10px">
      <button class="flat ms-1" aria-label="关键点模式"><svg width="11" height="9" fill="#ddd"><path d="M4.500 0v9L0 4.500zM6.500 0v9L11 4.500z"/></svg></button>
      <span class="num d-flex align-items-center justify-content-between" style="width:64px;height:16px"><input class="flat w-50 d-block" value="0" aria-label="当前帧"><svg width="7" height="11" fill="#ccc"><path d="M0 4h6L3 0zM0 7h6l-3 4z"/></svg></span>
      <button class="flat" aria-label="时间配置"><svg width="15" height="15"><circle cx="6" cy="6" r="5.500" fill="#ddd"/><path d="M6 2v4h3" stroke="#555" fill="none"/><circle cx="10.500" cy="10.500" r="3" fill="#444" stroke="#eda32b" stroke-width="2"/></svg></button>
    </div>
  </div>
  <button class="flat" style="width:39px;height:40px;background:#606060;border-radius:2px;margin:5px 5px 0 13px" aria-label="设置关键点"><svg width="28" height="30" fill="none"><path d="M13 2v20M2 11h22" stroke="#e4e4e4" stroke-width="4.500"/><circle cx="17" cy="25" r="3" stroke="#4bbfb8" stroke-width="2"/><path d="M19 22l7-7M23 18l3 3" stroke="#4bbfb8" stroke-width="2"/></svg></button>
  <div class="d-flex flex-column" style="padding-top:5px;gap:7px;width:178px">
    <div class="d-flex" style="gap:3px"><button class="keyb" style="width:63px">自动关键点</button><select class="form-select combo rounded-1 flex-grow-1 w-auto ps-2" aria-label="关键点对象" style="background-color:#505050"><option>选定对象</option></select></div>
    <div class="d-flex" style="gap:3px"><button class="keyb" style="width:63px">设置关键点</button><button class="flat fly position-relative" style="width:24px" aria-label="切线"><svg width="16" height="15" fill="none" stroke="#4bbfb8" stroke-width="1.800"><path d="M1 14c2-2 2-6 3-10M15 14c-2-2-2-6-3-10M5 3h6"/><path d="M5 1h5v4H5z" fill="#444" stroke="#ccc" stroke-width="1"/></svg></button><button class="keyb flex-grow-1">关键点过滤器...</button></div>
  </div>
  <div class="nav4 align-content-start" style="padding-top:5px;margin-left:13px;width:104px">
    <button class="flat" aria-label="缩放"><svg width="15" height="16" fill="none" stroke="#ccc" stroke-width="2"><circle cx="8" cy="6" r="4.500"/><path d="M5 9l-4 6"/></svg></button>
    <button class="flat" aria-label="缩放所有视图"><svg width="17" height="16" fill="none" stroke="#ccc" stroke-width="2"><path d="M5 1h11v9H5z" fill="#3faa9d" stroke="none"/><circle cx="7" cy="7" r="3.500"/><path d="M5 10l-4 5"/></svg></button>
    <button class="flat fly position-relative" aria-label="最大化显示"><svg width="17" height="17"><path d="M3 6l6-3 6 3v6l-6 3-6-3z" fill="#3faa9d"/><path d="M1 4V1h3M1 13v3h3M13 16h3v-3" stroke="#ccc" stroke-width="1.500" fill="none"/></svg></button>
    <button class="flat fly position-relative" aria-label="所有视图最大化显示"><svg width="18" height="17"><path d="M8 3l4-2 4 2v9l-4 2-4-2z" fill="#3faa9d"/><path d="M1 7h5M4 11h3M1 5v4" stroke="#ccc" stroke-width="1.500"/></svg></button>
    <button class="flat fly position-relative" aria-label="视野"><svg width="15" height="15" fill="none" stroke="#ccc" stroke-width="1.800"><path d="M1 1l11 6L2 12M3 4c3 1 3 4 2 6"/></svg></button>
    <button class="flat fly position-relative" aria-label="平移"><svg width="15" height="17" fill="none" stroke="#ddd" stroke-width="1.900" stroke-linecap="round"><path d="M4 10L2 5M6 9V2M8.500 9V1M11 9V3M13 10l1-4"/><path d="M3 9h10l-1 5-3 2H6z" fill="#ddd" stroke-width="1"/></svg></button>
    <button class="flat fly position-relative" aria-label="环绕"><svg width="17" height="16" fill="none" stroke="#ccc" stroke-width="1.600"><path d="M4 3h7v8H4z" fill="#3faa9d" stroke="none"/><ellipse cx="8" cy="8" rx="8" ry="3.500" transform="rotate(-40 8 8)"/></svg></button>
    <button class="flat" aria-label="最大化视口切换"><svg width="15" height="15"><path d="M1 1h13v13H1z" fill="none" stroke="#ddd" stroke-width="1.500"/><path d="M2 8h6v6H2zM8 2h5v5z" fill="#ddd"/><path d="M7 8l4-4" stroke="#ddd"/></svg></button>
  </div>
  <svg class="align-self-end" width="10" height="10" fill="#ccc"><path d="M6 1h2v2H6zM3 4h2v2H3zM6 4h2v2H6zM0 7h2v2H0zM3 7h2v2H3zM6 7h2v2H6z"/></svg>
</footer>

<div class="stamp d-flex align-items-center">
  <svg width="44" height="36" style="margin:8px 6px 0 0"><ellipse cx="16" cy="14" rx="14" ry="12" fill="#c0c0c0" opacity=".85"/><path d="M7 22l-2 7 8-4z" fill="#c0c0c0"/><ellipse cx="30" cy="22" rx="12" ry="10" fill="#d2d2d2" opacity=".85"/><path d="M33 30l6 4-1-6z" fill="#d2d2d2"/><g fill="#555"><circle cx="11" cy="9" r="2"/><circle cx="21" cy="9" r="2"/><circle cx="26" cy="19" r="1.600"/><circle cx="34" cy="19" r="1.600"/></g><path d="M25 15l9 7-9 7z" fill="#eee"/></svg><span>公众号</span><span style="width:38px;text-align:center">·</span><span>小李学姐资料分享</span>
</div>

<script src="https://cdn.jsdelivr.net/npm/bootstrap@5.3.0/dist/js/bootstrap.bundle.min.js"></script>
<script>
// Ground plane, 14 x 14 cells, projected in perspective.
const project = (u, v) => {
  const d = 41.1 - (u + v);
  return (664.5 + 477 * (u - v) / d).toFixed(1) + ' ' + (175 + 9867 / d).toFixed(1);
};
let plane = '';
for (let i = -7; i <= 7; i++) {
  plane += 'M' + project(i, -7) + 'L' + project(i, 7) + 'M' + project(-7, i) + 'L' + project(7, i);
}
document.getElementById('plane').setAttribute('d', plane);

// Frame ruler, 0 to 100.
let ruler = '';
for (let f = 0; f <= 100; f++) {
  const x = (0.31 + f * 0.9933).toFixed(2) + '%', major = f % 10 === 0;
  ruler += `<line x1="${x}" x2="${x}" y1="0" y2="${major ? 25 : 12}" stroke="${major ? '#666' : '#5e5e5e'}"/>`;
  if (major) ruler += `<text x="${x}" y="21">${f}</text>`;
}
document.getElementById('ticks').insertAdjacentHTML('beforeend', ruler);
</script>
</body>
</html>
